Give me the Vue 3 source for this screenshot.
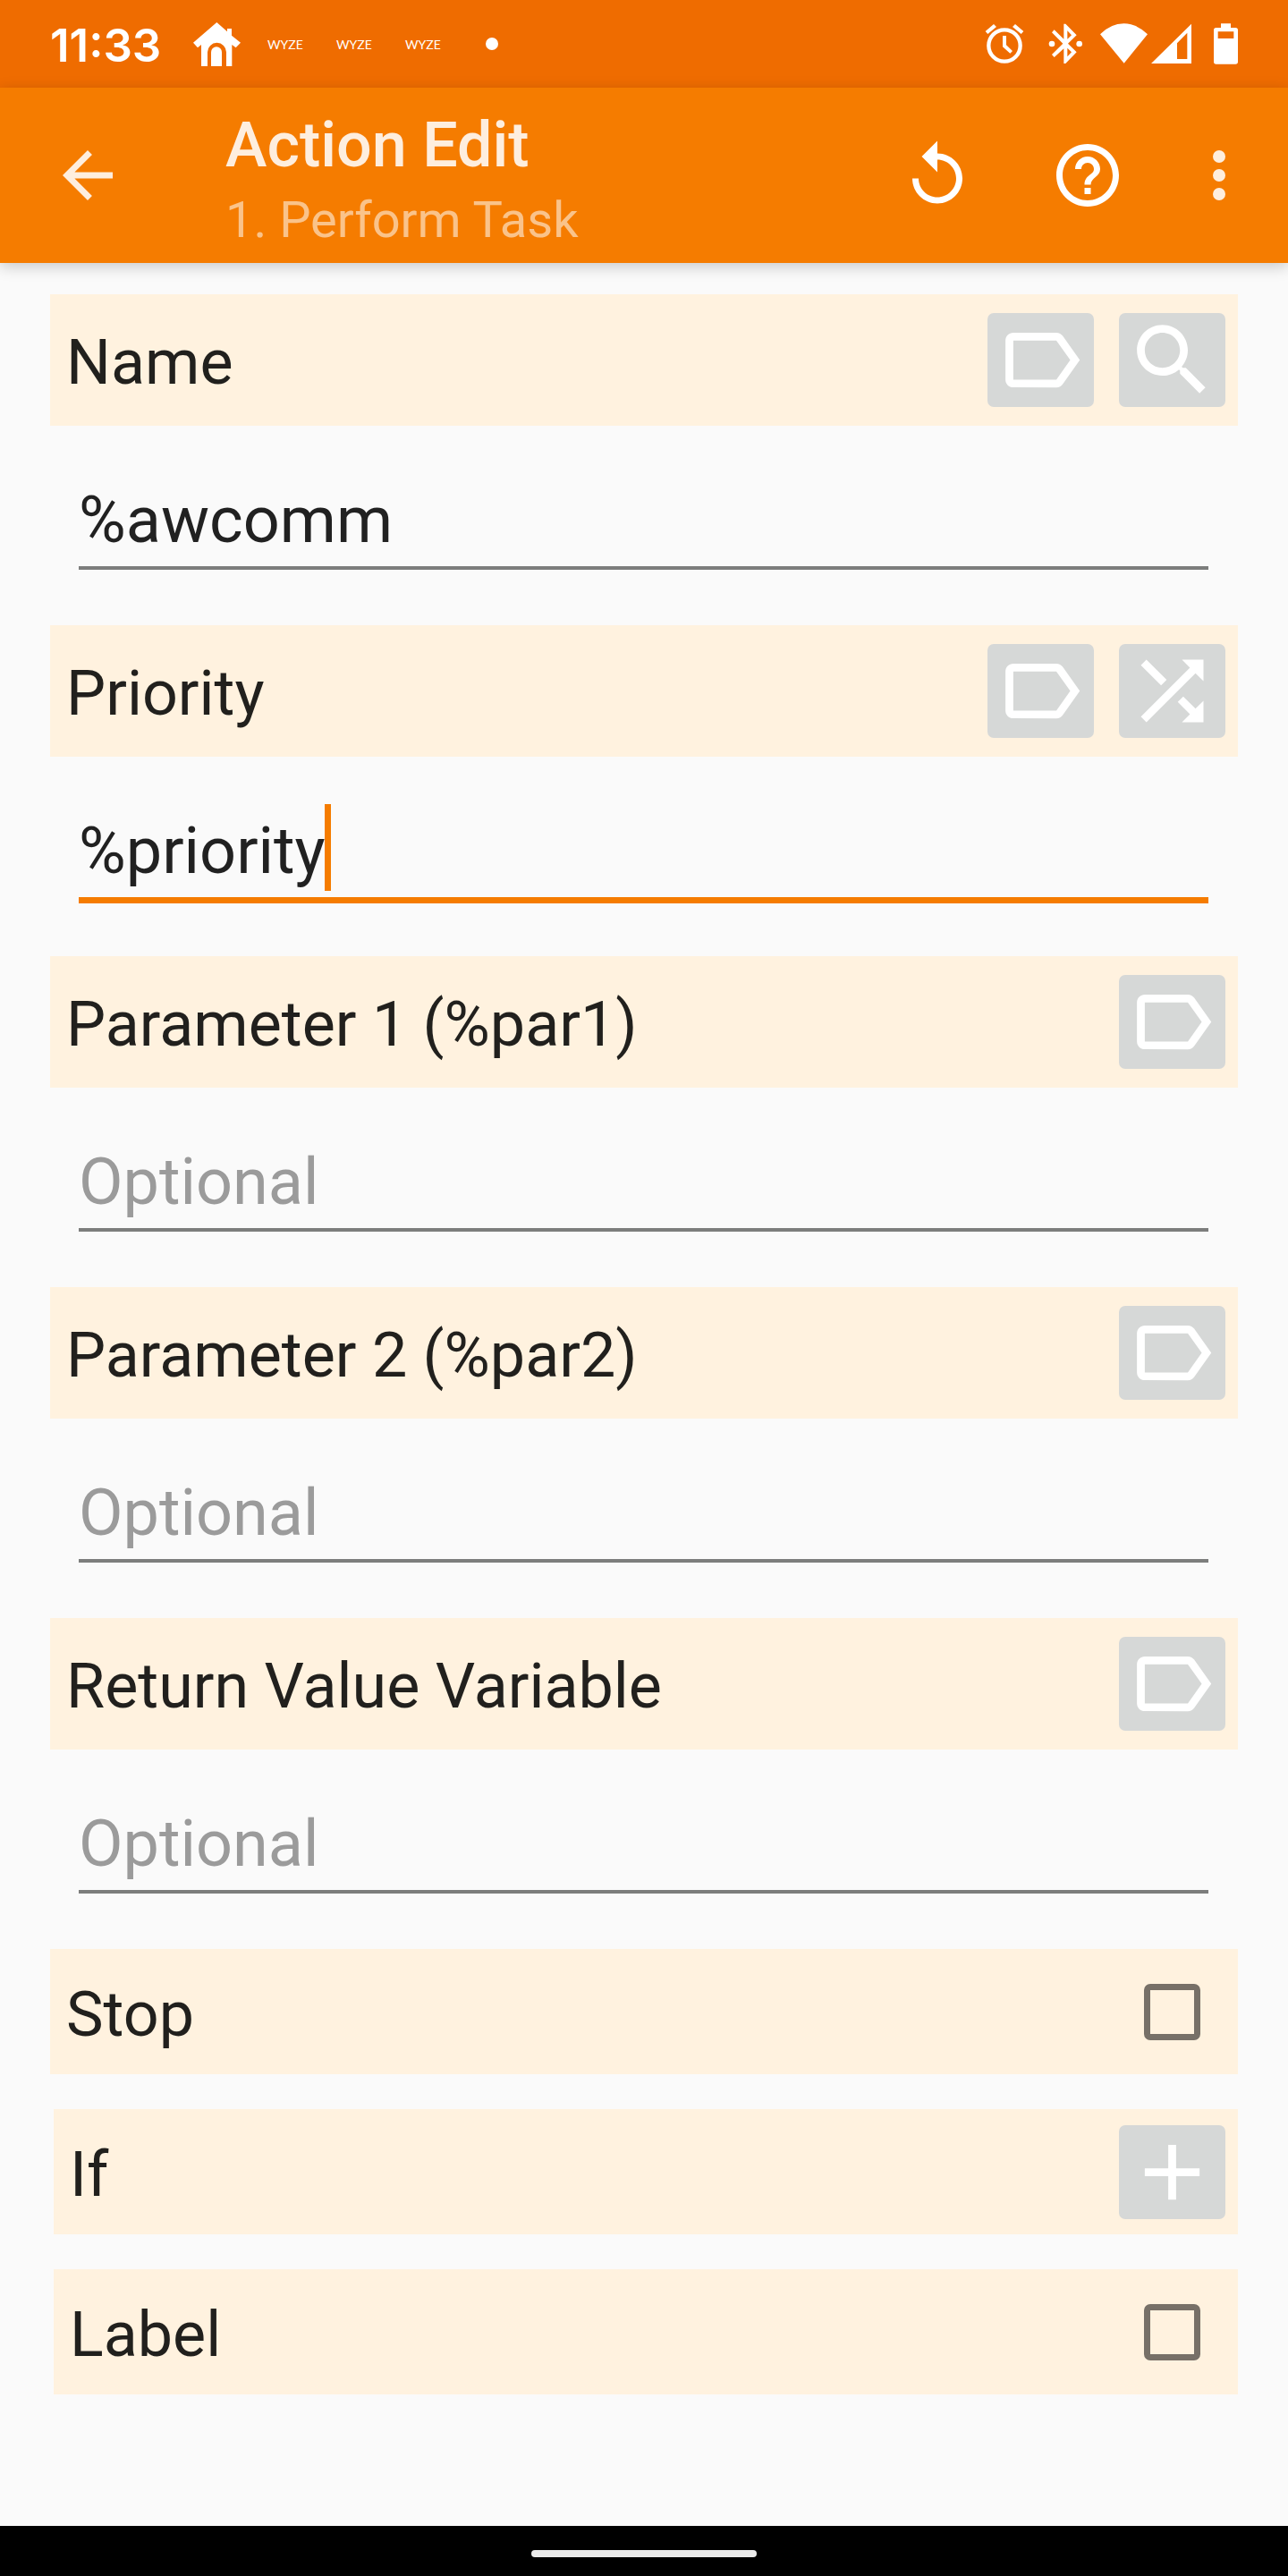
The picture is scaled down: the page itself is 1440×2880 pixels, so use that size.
<script setup>
import { reactive, ref } from 'vue'

const icons = {
  tag: 'M17.63 5.84C17.27 5.33 16.67 5 16 5L5 5.01C3.9 5.01 3 5.9 3 7v10c0 1.1.9 1.99 2 1.99L16 19c.67 0 1.27-.33 1.63-.84L22 12l-4.37-6.16zM16 17H5V7h11l3.55 5L16 17z',
  search: 'M15.5 14h-.79l-.28-.27C15.41 12.59 16 11.11 16 9.5 16 5.91 13.09 3 9.5 3S3 5.91 3 9.5 5.91 16 9.5 16c1.61 0 3.09-.59 4.23-1.57l.27.28v.79l5 4.99L20.49 19l-4.99-5zm-6 0C7.01 14 5 11.99 5 9.5S7.01 5 9.5 5 14 7.01 14 9.5 11.99 14 9.5 14z',
  shuffle: 'M10.59 9.17L5.41 4 4 5.41l5.17 5.17 1.42-1.41zM14.5 4l2.04 2.04L4 18.59 5.41 20 17.96 7.46 20 9.5V4h-5.5zm.33 9.41l-1.41 1.41 3.13 3.13L14.5 20H20v-5.5l-2.04 2.04-3.13-3.13z',
  add: 'M19 13h-6v6h-2v-6H5v-2h6V5h2v6h6v2z',
}

const fields = reactive([
  { id: 'name', label: 'Name', value: '%awcomm', placeholder: '', actions: [['tag', 'Pick variable'], ['search', 'Find task']] },
  { id: 'priority', label: 'Priority', value: '%priority', placeholder: '', active: true, actions: [['tag', 'Pick variable'], ['shuffle', 'Switch input type']] },
  { id: 'par1', label: 'Parameter 1 (%par1)', value: '', placeholder: 'Optional', actions: [['tag', 'Pick variable']] },
  { id: 'par2', label: 'Parameter 2 (%par2)', value: '', placeholder: 'Optional', actions: [['tag', 'Pick variable']] },
  { id: 'return', label: 'Return Value Variable', value: '', placeholder: 'Optional', actions: [['tag', 'Pick variable']] },
])

const stop = ref(false)
const label = ref(false)
</script>

<template>
  <div class="screen">
    <div class="status">
      <span class="clock">11:33</span>
      <svg class="home" viewBox="48 42 159 147" aria-hidden="true">
        <path d="M127 42L162 73V63H177V86L207 110L191 127L178 117V189H159V142A31 31 0 0 0 96 142V189H75V117L63 127L48 110Z" />
        <path d="M108 189V142A18 18 0 0 1 144 142V189Z" />
      </svg>
      <span class="notices">
        <span v-for="n in 3" :key="n" class="wyze">WYZE</span>
      </span>
      <span class="more-dot"></span>
      <div class="system">
        <svg class="alarm" viewBox="33 48 132 138" aria-hidden="true">
          <circle cx="99" cy="123" r="53" fill="none" stroke="#fff" stroke-width="13" />
          <path d="M93 90H105V121L126 141L118 149L93 127Z" />
          <path d="M35 75L63 51L72 60L43 84ZM163 75L135 51L126 60L155 84Z" />
        </svg>
        <svg class="bluetooth" viewBox="245 48 114 138" aria-hidden="true">
          <path fill-rule="evenodd" d="M297 50H303L340 88L311 116L340 145L303 183H297V133L265 162L257 153L294 116L257 79L265 70L297 101ZM309 73V101L323 88ZM309 131V160L323 145Z" />
          <circle cx="257" cy="117" r="10" />
          <circle cx="349" cy="117" r="10" />
        </svg>
        <svg class="wifi" viewBox="420 48 159 138" aria-hidden="true">
          <path d="M420 85Q456 49 499.500 49T579 85L500 182Z" />
        </svg>
        <svg class="signal" viewBox="591 48 135 138" aria-hidden="true">
          <path fill-rule="evenodd" d="M591 183L726 50V183ZM678 115V168H712V80Z" />
        </svg>
        <svg class="battery" viewBox="801 48 81 138" aria-hidden="true">
          <path fill-rule="evenodd" d="M825 49H858V63H874Q882 63 882 71V177Q882 185 874 185H809Q801 185 801 177V71Q801 63 809 63H825ZM815 76V99H868V76Z" />
        </svg>
      </div>
    </div>

    <header class="appbar">
      <button class="bar-btn back" type="button" aria-label="Back">
        <svg viewBox="0 0 24 24"><path d="M20 11H7.83l5.59-5.59L12 4l-8 8 8 8 1.410-1.410L7.830 13H20v-2z" /></svg>
      </button>
      <div class="titles">
        <h1>Action Edit</h1>
        <p>1. Perform Task</p>
      </div>
      <button class="bar-btn" type="button" aria-label="Revert">
        <svg viewBox="0 0 24 24"><path d="M12 5V1L7 6l5 5V7c3.310 0 6 2.690 6 6s-2.690 6-6 6-6-2.690-6-6H4c0 4.420 3.580 8 8 8s8-3.580 8-8-3.580-8-8-8z" /></svg>
      </button>
      <button class="bar-btn" type="button" aria-label="Help">
        <svg viewBox="0 0 24 24"><path d="M11 18h2v-2h-2v2zm1-16C6.480 2 2 6.480 2 12s4.480 10 10 10 10-4.480 10-10S17.520 2 12 2zm0 18c-4.410 0-8-3.590-8-8s3.590-8 8-8 8 3.590 8 8-3.590 8-8 8zm0-14c-2.210 0-4 1.790-4 4h2c0-1.100.9-2 2-2s2 .9 2 2c0 2-3 1.750-3 5h2c0-2.250 3-2.500 3-5 0-2.210-1.790-4-4-4z" /></svg>
      </button>
      <button class="bar-btn overflow" type="button" aria-label="More options">
        <svg viewBox="0 0 24 24"><circle cx="12" cy="6" r="2" /><circle cx="12" cy="12" r="2" /><circle cx="12" cy="18" r="2" /></svg>
      </button>
    </header>

    <main class="form">
      <section v-for="f in fields" :key="f.id" class="field">
        <div class="row tall">
          <label :for="f.id">{{ f.label }}</label>
          <button v-for="[icon, hint] in f.actions" :key="icon" class="action" type="button" :aria-label="hint">
            <svg viewBox="0 0 24 24"><path :d="icons[icon]" /></svg>
          </button>
        </div>
        <div class="entry" :class="{ active: f.active }">
          <input :id="f.id" v-model="f.value" type="text" :placeholder="f.placeholder" />
          <span v-if="f.active" class="caret"></span>
        </div>
      </section>

      <div class="options">
        <div class="row">
          <label for="stop">Stop</label>
          <span class="check"><input id="stop" v-model="stop" type="checkbox" /></span>
        </div>
        <div class="row inset">
          <span class="caption">If</span>
          <button class="action" type="button" aria-label="Add condition">
            <svg viewBox="0 0 24 24"><path :d="icons.add" /></svg>
          </button>
        </div>
        <div class="row inset">
          <label for="label">Label</label>
          <span class="check"><input id="label" v-model="label" type="checkbox" /></span>
        </div>
      </div>
    </main>

    <nav class="gesture"><span class="pill"></span></nav>
  </div>
</template>

<style>
body {
  margin: 0;
  background: #fafafa;
}
</style>

<style scoped>
.screen {
  display: flex;
  flex-direction: column;
  min-height: 100vh;
  background: #fafafa;
  color: rgba(0, 0, 0, 0.87);
  font-family: Roboto, sans-serif;
}

.screen * {
  box-sizing: border-box;
}

svg {
  display: block;
  flex: none;
  fill: currentColor;
}

button {
  border: 0;
  padding: 0;
  background: none;
  color: inherit;
  font: inherit;
}

/* status bar */
.status {
  display: flex;
  align-items: center;
  height: 98px;
  padding: 0 56px;
  background: #ef6c00;
  color: #fff;
}

.clock {
  width: 160px;
  padding-top: 4px;
  font-family: Inter, sans-serif;
  font-size: 51px;
  font-weight: 600;
  line-height: 64px;
}

.home {
  width: 53px;
  height: 49px;
}

.notices {
  display: flex;
  gap: 37px;
  margin-left: 30px;
}

.wyze {
  width: 40px;
  padding-top: 2px;
  font-family: Lato, sans-serif;
  font-size: 14px;
  line-height: 20px;
}

.more-dot {
  width: 14px;
  height: 14px;
  margin-left: 50px;
  border-radius: 50%;
  background: #fff;
}

.system {
  display: flex;
  margin-left: auto;
}

.system svg {
  height: 46px;
}

.alarm {
  width: 44px;
}

.bluetooth {
  width: 38px;
  margin-left: 27px;
}

.wifi {
  width: 53px;
  margin-left: 20px;
}

.signal {
  width: 45px;
  margin-left: 4px;
}

.battery {
  width: 27px;
  margin-left: 25px;
}

/* app bar */
.appbar {
  display: flex;
  align-items: center;
  height: 196px;
  padding: 0 14px;
  background: #f57c00;
  box-shadow: 0 4px 16px rgba(0, 0, 0, 0.2);
  color: #fff;
}

.bar-btn {
  display: flex;
  flex: none;
  align-items: center;
  justify-content: center;
  width: 168px;
  height: 168px;
}

.bar-btn svg {
  width: 84px;
  height: 84px;
}

.back,
.overflow {
  color: rgba(255, 255, 255, 0.87);
}

.overflow {
  width: 126px;
}

.titles {
  display: flex;
  flex: 1;
  flex-direction: column;
  gap: 10px;
  min-width: 0;
  padding: 8px 0 0 70px;
}

.titles h1,
.titles p {
  margin: 0;
}

.titles h1 {
  color: rgba(255, 255, 255, 0.87);
  font-size: 70px;
  font-weight: 500;
  line-height: 82px;
}

.titles p {
  color: rgba(255, 255, 255, 0.54);
  font-size: 56px;
  line-height: 66px;
}

/* form */
.form {
  flex: 1;
  padding: 35px 56px 147px;
}

.row {
  display: flex;
  align-items: center;
  gap: 28px;
  height: 140px;
  padding: 0 14px 0 18px;
  background: #fff2df;
}

.row.tall {
  height: 147px;
}

.row.inset {
  margin-left: 4px;
}

.row label,
.caption {
  flex: 1;
  padding-top: 5px;
  font-size: 70px;
  line-height: 82px;
}

.action {
  display: flex;
  flex: none;
  align-items: center;
  justify-content: center;
  width: 119px;
  height: 105px;
  border-radius: 7px;
  background: #d6d8d7;
  color: #fff;
}

.action svg {
  width: 105px;
  height: 105px;
}

.entry {
  position: relative;
  height: 223px;
  padding: 64px 33px 0 32px;
}

.entry input {
  display: block;
  width: 100%;
  height: 97px;
  padding: 0 0 11px;
  border: 0;
  border-bottom: 4px solid #7c7d7c;
  border-radius: 0;
  outline: 0;
  background: none;
  color: inherit;
  font: 72px/82px Roboto, sans-serif;
}

.entry input::placeholder {
  color: #9b9b9b;
  opacity: 1;
}

.entry.active input {
  height: 100px;
  border-bottom: 7px solid #f57c00;
}

.caret {
  position: absolute;
  top: 53px;
  left: 307px;
  width: 7px;
  height: 97px;
  background: #f57c00;
}

.options {
  display: flex;
  flex-direction: column;
  gap: 39px;
}

.check {
  display: flex;
  justify-content: center;
  width: 119px;
}

.check input {
  width: 63px;
  height: 63px;
  margin: 0;
  border: 7px solid #777068;
  border-radius: 7px;
  appearance: none;
}

.check input:checked {
  background: #f57c00;
}

/* gesture bar */
.gesture {
  display: flex;
  align-items: center;
  justify-content: center;
  height: 56px;
  padding-top: 6px;
  background: #000;
}

.pill {
  width: 252px;
  height: 8px;
  border-radius: 4px;
  background: #ebebeb;
}
</style>
